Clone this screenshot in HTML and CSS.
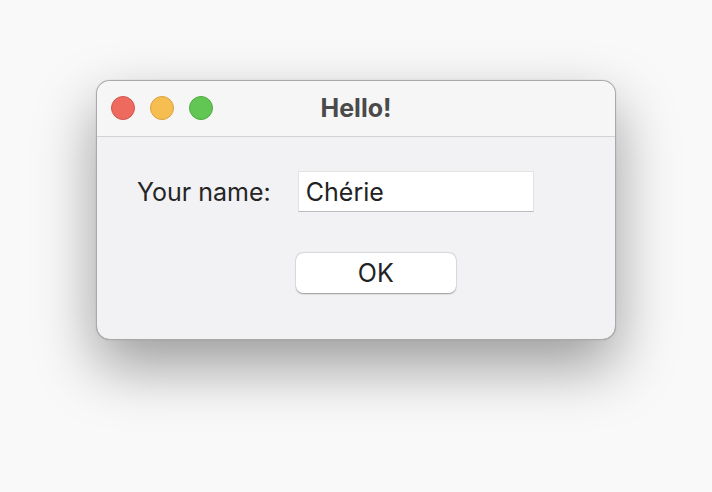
FILE: index.html
```html
<!DOCTYPE html>
<html>
<head>
<meta charset="utf-8">
<link rel="stylesheet" href="styles.css">
</head>
<body>
<div class="window">
  <div class="titlebar">
    <div class="lights">
      <span class="light red"></span>
      <span class="light yellow"></span>
      <span class="light green"></span>
    </div>
    <div class="title">Hello!</div>
  </div>
  <div class="content">
    <div class="form">
      <label class="label">Your name:</label>
      <div class="field">Chérie</div>
      <div class="spacer"></div>
      <button class="btn">OK</button>
    </div>
  </div>
</div>
</body>
</html>
```
FILE: styles.css
```css
html, body {
  margin: 0;
  height: 100%;
}
body {
  background: #f9f9f9;
  font-family: "Inter", "Liberation Sans", sans-serif;
  padding: 80px 0 0 96px;
  box-sizing: border-box;
}
.window {
  width: 520px;
  height: 260px;
  box-sizing: border-box;
  border-radius: 14px;
  background: #f2f2f4;
  border: 1px solid #a9a9a9;
  box-shadow: 0 26px 60px rgba(0,0,0,0.38), 0 0 1px rgba(0,0,0,0.3);
  overflow: hidden;
  display: flex;
  flex-direction: column;
}
.titlebar {
  height: 55px;
  flex: none;
  background: #f6f6f6;
  border-bottom: 1px solid #d3d3d3;
  position: relative;
  display: flex;
  align-items: center;
  justify-content: center;
}
.lights {
  position: absolute;
  left: 14px;
  top: 15px;
  display: flex;
  gap: 15px;
}
.light {
  width: 24px;
  height: 24px;
  border-radius: 50%;
  box-sizing: border-box;
}
.red { background: #ee6a5f; border: 1px solid #d2554b; }
.yellow { background: #f6be50; border: 1px solid #d9a13c; }
.green { background: #62c654; border: 1px solid #4fab42; }
.title {
  font-weight: 700;
  font-size: 25px;
  color: #4a4a4a;
  margin-top: -2px;
}
.content {
  padding: 34px 0 0 40px;
}
.form {
  display: grid;
  grid-template-columns: auto auto;
  column-gap: 27px;
  row-gap: 41px;
  align-items: center;
  justify-content: start;
}
.label {
  font-size: 25px;
  color: #252525;
}
.field {
  width: 236px;
  height: 41px;
  box-sizing: border-box;
  background: #ffffff;
  border: 1px solid #e3e3e3;
  border-bottom-color: #bdbdbd;
  font-size: 25px;
  color: #222;
  padding: 0 0 0 7px;
  display: flex;
  align-items: center;
}
.btn {
  width: 160px;
  height: 40px;
  margin-left: -2px;
  border: none;
  border-radius: 7px;
  background: #ffffff;
  box-shadow: 0 0.5px 1.5px rgba(0,0,0,0.35), 0 0 0 0.5px rgba(0,0,0,0.08);
  font-family: inherit;
  font-size: 25px;
  color: #222;
  padding: 0;
}
```
